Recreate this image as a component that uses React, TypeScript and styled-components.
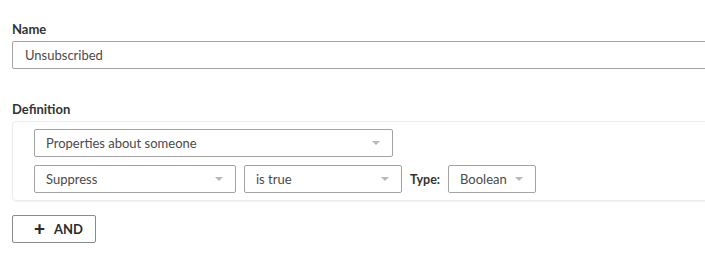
import styled, { createGlobalStyle } from 'styled-components'

const GlobalStyle = createGlobalStyle`
  html, body {
    margin: 0;
    padding: 0;
    background: #fff;
    overflow: hidden;
  }
  body {
    font-family: Lato, "Open Sans", Arial, sans-serif;
    color: #3c3c3c;
  }
`

const Page = styled.div`
  width: 740px;
  padding: 21px 0 0 12px;
  box-sizing: border-box;
`

const Field = styled.div<{ $gap?: number }>`
  display: flex;
  flex-direction: column;
  margin-bottom: ${(p) => p.$gap ?? 0}px;
`

const Label = styled.label`
  font-size: 13px;
  font-weight: 700;
  color: #333;
  line-height: 16px;
  margin-bottom: 4px;
`

const TextInput = styled.div`
  height: 28px;
  box-sizing: border-box;
  border: 1px solid #a3a3a3;
  border-radius: 2px;
  padding: 0 12px;
  display: flex;
  align-items: center;
  font-size: 13px;
  color: #4a4a4a;
`

const Card = styled.div`
  box-sizing: border-box;
  border: 1px solid #ececec;
  border-radius: 4px;
  box-shadow: 0 1px 2px rgba(0, 0, 0, 0.06);
  padding: 7px 0 7px 21px;
  display: flex;
  flex-direction: column;
  gap: 8px;
`

const Row = styled.div`
  display: flex;
  align-items: center;
  gap: 8px;
`

const Select = styled.div<{ $width: number }>`
  width: ${(p) => p.$width}px;
  height: 28px;
  box-sizing: border-box;
  border: 1px solid #a3a3a3;
  border-radius: 2px;
  padding: 0 11px;
  display: flex;
  align-items: center;
  justify-content: space-between;
  font-size: 13px;
  color: #4a4a4a;
`

const Caret = styled.span`
  width: 0;
  height: 0;
  border-left: 4px solid transparent;
  border-right: 4px solid transparent;
  border-top: 4px solid #b8b8b8;
  margin-right: 1px;
`

const TypeLabel = styled.span`
  font-size: 12.5px;
  font-weight: 700;
  color: #333;
`

const AndButton = styled.button`
  margin-top: 14px;
  width: 84px;
  height: 28px;
  box-sizing: border-box;
  border: 1px solid #8a8a8a;
  border-radius: 2px;
  background: #fff;
  font-family: inherit;
  font-size: 13px;
  font-weight: 700;
  color: #2b2b2b;
  display: flex;
  align-items: center;
  justify-content: flex-start;
  padding: 0 0 0 21px;
  gap: 9px;
  cursor: pointer;
`

const Plus = styled.span`
  font-size: 19px;
  font-weight: 900;
  line-height: 1;
  margin-top: -2px;
`

const Dropdown = ({ width, children }: { width: number; children: string }) => (
  <Select $width={width}>
    <span>{children}</span>
    <Caret />
  </Select>
)

export default function App() {
  return (
    <>
      <GlobalStyle />
      <Page>
        <Field $gap={32}>
          <Label>Name</Label>
          <TextInput>Unsubscribed</TextInput>
        </Field>
        <Field>
          <Label>Definition</Label>
          <Card>
            <Row>
              <Dropdown width={359}>Properties about someone</Dropdown>
            </Row>
            <Row>
              <Dropdown width={202}>Suppress</Dropdown>
              <Dropdown width={158}>is true</Dropdown>
              <TypeLabel>Type:</TypeLabel>
              <Dropdown width={88}>Boolean</Dropdown>
            </Row>
          </Card>
        </Field>
        <AndButton>
          <Plus>+</Plus>
          AND
        </AndButton>
      </Page>
    </>
  )
}
